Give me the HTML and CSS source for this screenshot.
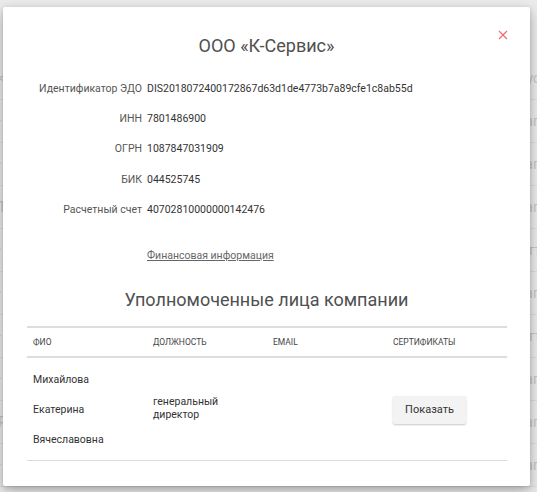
FILE: index.html
```html
<!DOCTYPE html>
<html lang="ru">
<head>
<meta charset="utf-8">
<link rel="stylesheet" href="styles.css">
</head>
<body>
<div class="bg">
  <div class="bg-row"><span class="bg-l">&lt;</span><span class="bg-r">уо</span></div>
  <div class="bg-row"><span class="bg-l">·</span><span class="bg-r">ап</span></div>
  <div class="bg-row"><span class="bg-l">·</span><span class="bg-r">ап</span></div>
  <div class="bg-row"><span class="bg-l">Т</span><span class="bg-r">ап</span></div>
  <div class="bg-row"><span class="bg-l">·</span><span class="bg-r">тт</span></div>
  <div class="bg-row"><span class="bg-l">·</span><span class="bg-r">ап</span></div>
  <div class="bg-row"><span class="bg-l">·</span><span class="bg-r">тт</span></div>
  <div class="bg-row"><span class="bg-l">·</span><span class="bg-r">ап</span></div>
  <div class="bg-row"><span class="bg-l">Р</span><span class="bg-r">ап</span></div>
  <div class="bg-row"><span class="bg-l">·</span><span class="bg-r">ап</span></div>
</div>

<div class="modal">
  <button class="close" aria-label="Закрыть">
    <svg width="10" height="10" viewBox="0 0 10 10"><path d="M1 1L9 9M9 1L1 9" stroke="#ef6b6b" stroke-width="1.2" fill="none"/></svg>
  </button>
  <h1 class="title">ООО «К-Сервис»</h1>

  <div class="info">
    <div class="label">Идентификатор ЭДО</div><div class="value">DIS2018072400172867d63d1de4773b7a89cfe1c8ab55d</div>
    <div class="label">ИНН</div><div class="value">7801486900</div>
    <div class="label">ОГРН</div><div class="value">1087847031909</div>
    <div class="label">БИК</div><div class="value">044525745</div>
    <div class="label">Расчетный счет</div><div class="value">40702810000000142476</div>
    <div class="label"></div><div class="value link-cell"><a class="fin-link" href="#">Финансовая информация</a></div>
  </div>

  <h2 class="subtitle">Уполномоченные лица компании</h2>

  <table class="people">
    <thead>
      <tr><th>ФИО</th><th>Должность</th><th>Email</th><th>Сертификаты</th></tr>
    </thead>
    <tbody>
      <tr>
        <td class="name">Михайлова Екатерина Вячеславовна</td>
        <td class="pos">генеральный директор</td>
        <td></td>
        <td><button class="btn">Показать</button></td>
      </tr>
    </tbody>
  </table>
</div>
</body>
</html>
```

FILE: styles.css
```css
* { box-sizing: border-box; }

html, body {
  margin: 0;
  padding: 0;
}

body {
  width: 537px;
  height: 492px;
  overflow: hidden;
  background: #ebebeb;
  font-family: Roboto, "Noto Sans", "Liberation Sans", sans-serif;
  color: #333;
  position: relative;
}

.bg {
  padding-top: 57px;
}

.bg-row {
  height: 43px;
  border-bottom: 1px solid #dddddd;
  display: flex;
  justify-content: space-between;
  align-items: center;
  font-size: 14px;
  color: #c4c4c4;
}

.bg-l { margin-left: -2px; }
.bg-r { margin-right: -4px; }

.modal {
  position: absolute;
  left: 3px;
  top: 7px;
  width: 527px;
  height: 479px;
  background: #fff;
  border-radius: 2px;
  box-shadow: 0 5px 14px rgba(0, 0, 0, 0.28), 0 1px 4px rgba(0, 0, 0, 0.12);
  padding: 27px 24px 0 24px;
}

.close {
  position: absolute;
  right: 20px;
  top: 21px;
  width: 14px;
  height: 14px;
  padding: 2px;
  border: 0;
  background: none;
  display: flex;
  align-items: center;
  justify-content: center;
}

.title {
  margin: 0;
  text-align: center;
  font-size: 18px;
  font-weight: 400;
  color: #505050;
  line-height: 24px;
}

.info {
  display: grid;
  grid-template-columns: 115px 1fr;
  column-gap: 5px;
  margin-top: 24px;
  font-size: 10.5px;
  line-height: 13px;
  row-gap: 17.2px;
}

.label {
  text-align: right;
  color: #555;
}

.value {
  color: #333;
}

.link-cell {
  padding-top: 16px;
}

.fin-link {
  color: #666;
  font-size: 10.5px;
  text-decoration: underline;
}

.subtitle {
  margin: 26px 0 0 0;
  text-align: center;
  font-size: 18px;
  font-weight: 400;
  color: #505050;
  line-height: 24px;
}

.people {
  width: 480px;
  margin-top: 14px;
  border-collapse: collapse;
  table-layout: fixed;
}

.people th {
  width: 120px;
  text-align: left;
  font-weight: 400;
  font-size: 8.5px;
  text-transform: uppercase;
  color: #444;
  padding: 8px 6px 8px 6px;
  border-top: 2px solid #dddddd;
  border-bottom: 2px solid #dddddd;
  line-height: 12px;
}

.people td {
  font-size: 10.5px;
  color: #333;
  padding: 7px 6px 5px 6px;
  vertical-align: middle;
  border-bottom: 1px solid #dddddd;
}

.people td.name {
  line-height: 30px;
  padding-right: 40px;
}

.people td.pos {
  line-height: 13px;
  padding-right: 40px;
  padding-bottom: 8px;
}

.btn {
  font-family: inherit;
  font-size: 11px;
  color: #333;
  background: #f3f3f3;
  border: 0;
  border-radius: 2px;
  width: 73px;
  height: 28px;
  box-shadow: 0 1px 2px rgba(0, 0, 0, 0.22);
  padding: 0;
}
```
